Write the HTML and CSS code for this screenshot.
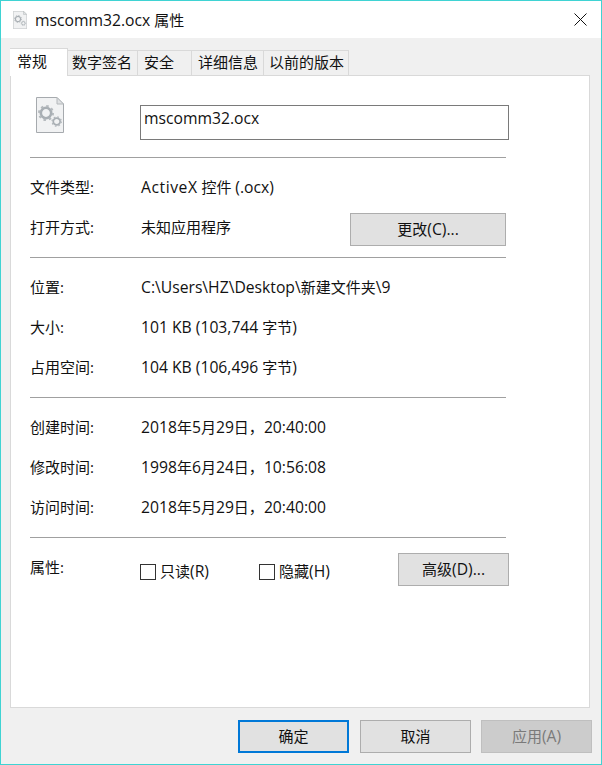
FILE: index.html
```html
<!DOCTYPE html>
<html lang="zh-CN">
<head>
<meta charset="utf-8">
<title>mscomm32.ocx 属性</title>
<link rel="stylesheet" href="styles.css">
</head>
<body>
<div class="window">
  <header class="titlebar">
    <svg class="title-icon" width="14" height="18" viewBox="0 0 28 36"><use href="#fileicon"/></svg>
    <span class="title-text"><span class="lat">mscomm32.ocx</span> 属性</span>
    <svg class="close" width="13" height="13" viewBox="0 0 13 13"><path d="M.5.5l12 12M12.5.5l-12 12" stroke="#111" fill="none"/></svg>
  </header>
  <main class="body">
    <nav class="tabs">
      <span class="tab active t1">常规</span>
      <span class="tab t2">数字签名</span>
      <span class="tab t3">安全</span>
      <span class="tab t4">详细信息</span>
      <span class="tab t5">以前的版本</span>
    </nav>
    <section class="panel">
      <div class="name-row">
        <svg class="file-icon" width="28" height="36" viewBox="0 0 28 36">
          <defs>
            <g id="gear">
              <circle r="5.200" fill="none" stroke="#a9afb4" stroke-width="2.600"/>
              <circle r="7" fill="none" stroke="#b4b9bd" stroke-width="2" stroke-dasharray="2.500 3"/>
            </g>
            <g id="fileicon">
              <path d="M.5.5H21L27.500 7V35.500H.5z" fill="#f1f2f3" stroke="#a6aaae"/>
              <path d="M21 .5V7h6.500z" fill="#dfe1e3" stroke="#b4b8bb"/>
              <use href="#gear" transform="translate(10 16)"/>
              <use href="#gear" transform="translate(20.700 24.500) scale(.66)"/>
            </g>
          </defs>
          <use href="#fileicon"/>
        </svg>
        <div class="name-box"><span class="lat">mscomm32.ocx</span></div>
      </div>
      <hr class="sep">
      <div class="group g-type">
        <div class="row"><span class="label">文件类型:</span><span class="value"><span class="lat wide">ActiveX</span> 控件 <span class="lat">(.ocx)</span></span></div>
        <div class="row"><span class="label">打开方式:</span><span class="value open-with">未知应用程序</span><button class="btn change">更改<span class="lat">(C)...</span></button></div>
      </div>
      <hr class="sep">
      <div class="group">
        <div class="row"><span class="label">位置:</span><span class="value"><span class="lat">C:\Users\HZ\Desktop\</span>新建文件夹<span class="lat">\9</span></span></div>
        <div class="row"><span class="label">大小:</span><span class="value"><span class="lat">101 KB (103,744</span> 字节<span class="lat">)</span></span></div>
        <div class="row"><span class="label">占用空间:</span><span class="value"><span class="lat">104 KB (106,496</span> 字节<span class="lat">)</span></span></div>
      </div>
      <hr class="sep">
      <div class="group">
        <div class="row"><span class="label">创建时间:</span><span class="value"><span class="lat">2018</span>年<span class="lat">5</span>月<span class="lat">29</span>日，<span class="lat">20:40:00</span></span></div>
        <div class="row"><span class="label">修改时间:</span><span class="value"><span class="lat">1998</span>年<span class="lat">6</span>月<span class="lat">24</span>日，<span class="lat">10:56:08</span></span></div>
        <div class="row"><span class="label">访问时间:</span><span class="value"><span class="lat">2018</span>年<span class="lat">5</span>月<span class="lat">29</span>日，<span class="lat">20:40:00</span></span></div>
      </div>
      <hr class="sep">
      <div class="attr-row">
        <span class="label">属性:</span>
        <span class="check c1"><i class="box"></i>只读<span class="lat">(R)</span></span>
        <span class="check c2"><i class="box"></i>隐藏<span class="lat">(H)</span></span>
        <button class="btn advanced">高级<span class="lat">(D)...</span></button>
      </div>
    </section>
    <footer class="actions">
      <button class="btn action primary">确定</button>
      <button class="btn action">取消</button>
      <button class="btn action disabled">应用<span class="lat">(A)</span></button>
    </footer>
  </main>
</div>
</body>
</html>
```

FILE: styles.css
```css
* { box-sizing: border-box; }
html, body { margin: 0; padding: 0; }
body {
  width: 602px;
  height: 765px;
  overflow: hidden;
  font-family: "Open Sans", "Noto Sans CJK SC", sans-serif;
  font-size: 15px;
  line-height: 20px;
  color: #111;
}
.lat { font-size: 15.7px; }
.wide { letter-spacing: .55px; }
.window {
  width: 602px;
  height: 765px;
  border: 1px solid #3fd3d3;
  display: flex;
  flex-direction: column;
  background: #f0f0f0;
}
.titlebar {
  height: 37px;
  flex: none;
  background: #fff;
  display: flex;
  align-items: center;
  padding: 0 14px 0 12px;
}
.title-icon { flex: none; }
.title-text { margin-left: 8px; flex: 1; }
.close { flex: none; }
.body {
  flex: 1;
  display: flex;
  flex-direction: column;
  padding: 10px 0 0 9px;
}
.tabs {
  display: flex;
  height: 27px;
  align-items: flex-start;
  position: relative;
  z-index: 1;
}
.tab {
  height: 26px;
  margin-top: 2px;
  background: #f0f0f0;
  border: 1px solid #d9d9d9;
  border-left: 0;
  display: flex;
  align-items: center;
  white-space: nowrap;
  padding: 0 0 2px 6px;
}
.tab.active {
  height: 28px;
  margin-top: 0;
  background: #fff;
  border-width: 1px 1px 0 1px;
  padding: 0 0 4px 7px;
}
.t1 { width: 58px; }
.t2 { width: 70px; padding-left: 4px; }
.t3 { width: 54px; }
.t4 { width: 72px; }
.t5 { width: 85px; padding-left: 5px; }
.panel {
  width: 580px;
  height: 633px;
  flex: none;
  background: #fff;
  border: 1px solid #d9d9d9;
  padding: 0 0 0 19px;
}
.name-row {
  display: flex;
  height: 81px;
  padding-top: 21px;
}
.file-icon { flex: none; margin-left: 6px; }
.name-box {
  width: 369px;
  height: 35px;
  margin: 8px 0 0 76px;
  border: 1px solid #7a7a7a;
  padding: 0 3px;
  line-height: 24px;
}
.sep {
  width: 476px;
  height: 1px;
  margin: 0;
  border: 0;
  background: #a0a0a0;
}
.group { padding: 9px 0 10px; }
.g-type { padding: 9px 0 0; height: 99px; }
.row {
  height: 40px;
  display: flex;
  align-items: center;
}
.label { width: 111px; flex: none; }
.value { white-space: nowrap; }
.open-with { width: 209px; flex: none; }
.btn {
  font: inherit;
  color: #111;
  background: #e1e1e1;
  border: 1px solid #adadad;
  padding: 0 0 2px;
}
.change { width: 156px; height: 33px; flex: none; align-self: flex-start; margin-top: 6px; }
.attr-row {
  display: flex;
  align-items: flex-start;
  height: 64px;
  padding-top: 15px;
}
.attr-row .label { width: 110px; padding-top: 4px; }
.check {
  display: flex;
  align-items: center;
  flex: none;
  height: 20px;
  margin-top: 8px;
}
.box {
  width: 16px;
  height: 16px;
  border: 1px solid #333;
  background: #fff;
  margin: 2px 4px 0 0;
  flex: none;
}
.c1 { width: 119px; }
.c2 { width: 139px; }
.advanced { width: 111px; height: 33px; flex: none; }
.actions {
  display: flex;
  gap: 11px;
  padding: 12px 0 0 228px;
}
.action { width: 111px; height: 33px; }
.primary { border: 2px solid #0078d7; }
.disabled { background: #cccccc; border-color: #bfbfbf; color: #7a7a7a; margin-left: -1px; }
```
